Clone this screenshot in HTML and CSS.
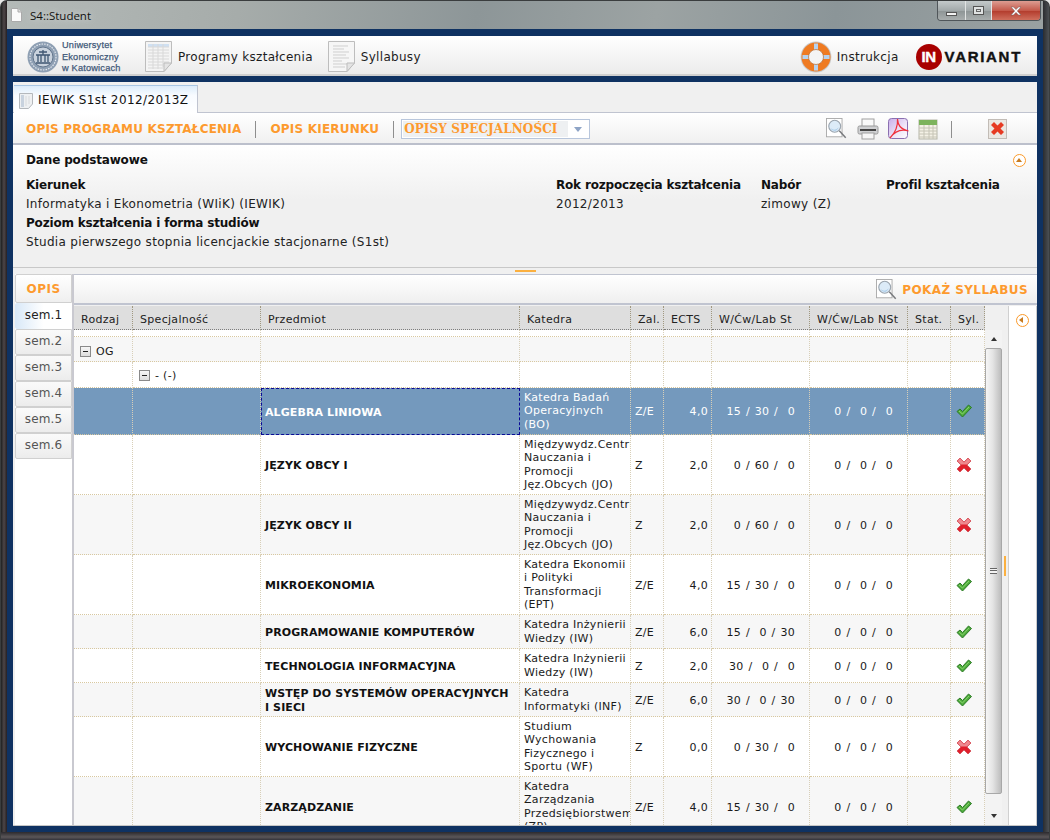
FILE: index.html
```html
<!DOCTYPE html>
<html lang="pl">
<head>
<meta charset="utf-8">
<title>S4::Student</title>
<link rel="stylesheet" href="styles.css">
</head>
<body>
<svg class="sprite" width="0" height="0" aria-hidden="true">
  <defs>
    <linearGradient id="pdfbg" x1="0" y1="0" x2="1" y2="1"><stop offset="0" stop-color="#c9aeea"/><stop offset=".6" stop-color="#efe6f8"/><stop offset="1" stop-color="#fff"/></linearGradient>
    <symbol id="ok" viewBox="0 0 16 14">
      <path d="M1 7.5 L4 5 L6.5 7.5 L12.5 1 L15.5 3.5 L6.5 13 Z" fill="#4caa3a" stroke="#2c7a25" stroke-width="1" stroke-linejoin="round"/>
      <path d="M3 7 L6.5 10 L13 3" fill="none" stroke="#8bd36f" stroke-width="1"/>
    </symbol>
    <symbol id="no" viewBox="0 0 16 16">
      <path d="M1 4 L4 1 L8 5 L12 1 L15 4 L11 8 L15 12 L12 15 L8 11 L4 15 L1 12 L5 8 Z" fill="#e0202c" stroke="#c8323c" stroke-width=".6" stroke-linejoin="round"/>
      <path d="M1.5 4 L4 1.5 L8 5.5 L12 1.5 L14.5 4 L11 7.5 L5 7.5 Z" fill="#ee8a90"/>
    </symbol>
    <symbol id="lens" viewBox="0 0 24 24">
      <rect x=".5" y=".5" width="17" height="20" fill="#fff" stroke="#a8a8a8"/>
      <circle cx="9.5" cy="9" r="6.5" fill="#dcebf8" stroke="#9aa4ae" stroke-width="1.2"/>
      <path d="M5 11 Q9 15 14 10 Q12 14 9 14 Q6 14 5 11Z" fill="#a8cbe8"/>
      <path d="M14.5 14 L21.5 21.5" stroke="#77797c" stroke-width="1.6"/>
    </symbol>
  </defs>
</svg>

<div class="window">
  <div class="titlebar">
    <svg class="title-icon" width="11" height="14" viewBox="0 0 11 14"><path d="M.5.5H7L10.5 4V13.5H.5Z" fill="#fafafa" stroke="#aaa"/><path d="M7 .5V4H10.5" fill="#ddd" stroke="#aaa"/></svg>
    <span class="title-text">S4::Student</span>
    <div class="win-buttons">
      <div class="win-btn win-min"><span class="min-glyph"></span></div>
      <div class="win-btn win-max"><span class="max-glyph"></span></div>
      <div class="win-btn win-close">
        <svg width="12" height="10" viewBox="0 0 12 10"><path d="M1 1H3.5L6 3.6 8.5 1H11L7.3 5 11 9H8.5L6 6.4 3.5 9H1L4.7 5Z" fill="#fff" stroke="#6d5a58" stroke-width=".5"/></svg>
      </div>
    </div>
  </div>

  <div class="client">
    <header class="app-header">
      <div class="uni">
        <svg width="32" height="32" viewBox="0 0 32 32">
          <circle cx="16" cy="16" r="15.5" fill="#8e9fb3"/>
          <circle cx="16" cy="16" r="13" fill="none" stroke="#e4e8ee" stroke-width="1.2" stroke-dasharray="1.5 1.2"/>
          <circle cx="16" cy="16" r="10" fill="#c9d2dd" stroke="#62758c"/>
          <path d="M9 14H23M11 14V21M14 14V21M18 14V21M21 14V21M9 22H23M16 9V14M12 11 H20" stroke="#3e5672" stroke-width="1.3" fill="none"/>
        </svg>
        <div class="uni-name">Uniwersytet<br>Ekonomiczny<br>w Katowicach</div>
      </div>
      <a class="nav-item">
        <svg width="27" height="31" viewBox="0 0 27 31">
          <path d="M.5.5H26.5V22L19 30.5H.5Z" fill="#f4f4f4" stroke="#bdbdbd"/>
          <rect x="3" y="3" width="21" height="3" fill="#cfe0f2"/>
          <path d="M3 6H24M3 9H24M3 12H24M3 15H24M3 18H24M3 21H24M3 24H18M3 27H18M8 3V28M13 3V28M18 3V26" stroke="#d8d8d8" fill="none"/>
          <path d="M19 30.5V22H26.5Z" fill="#e4e4e4" stroke="#bdbdbd"/>
        </svg>
        <span>Programy kształcenia</span>
      </a>
      <a class="nav-item">
        <svg width="27" height="31" viewBox="0 0 27 31">
          <path d="M.5.5H26.5V22L19 30.5H.5Z" fill="#f6f6f6" stroke="#bdbdbd"/>
          <path d="M5 5H20M5 8H16M5 11H21M5 14H18M5 17H21M5 20H14M5 23H20M5 26H17" stroke="#cfcfcf" fill="none"/>
          <path d="M19 30.5V22H26.5Z" fill="#e4e4e4" stroke="#bdbdbd"/>
        </svg>
        <span>Syllabusy</span>
      </a>
      <div class="header-spacer"></div>
      <a class="help">
        <svg width="32" height="32" viewBox="0 0 32 32">
          <circle cx="16" cy="16" r="15.4" fill="#c9c9c9"/>
          <circle cx="16" cy="16" r="11" fill="none" stroke="#ef7b22" stroke-width="7"/>
          <path d="M16 2.5V9M16 23V29.5M2.5 16H9M23 16H29.5" stroke="#b6d2ee" stroke-width="4"/>
          <circle cx="16" cy="16" r="7.5" fill="#f4f4f4" stroke="#b9672a" stroke-width=".7"/>
        </svg>
        <span>Instrukcja</span>
      </a>
      <div class="brand">
        <span class="brand-in">IN</span>
        <span class="brand-name">VARIANT</span>
      </div>
    </header>

    <main class="panel">
      <div class="tab-row">
        <div class="doc-tab">
          <svg width="14" height="16" viewBox="0 0 14 16"><path d="M.5.5H13.5V11L9.5 15.5H.5Z" fill="#eef0f2" stroke="#b4b8bc"/><rect x="2" y="2" width="3" height="12" fill="#c8d2de"/><path d="M7 3V13M10 3V11" stroke="#d8dadc"/></svg>
          <span>IEWIK S1st 2012/2013Z</span>
        </div>
      </div>

      <div class="toolbar">
        <a class="tool-link">OPIS PROGRAMU KSZTAŁCENIA</a>
        <span class="tool-sep"></span>
        <a class="tool-link">OPIS KIERUNKU</a>
        <span class="tool-sep"></span>
        <div class="combo">
          <span class="combo-text">OPISY SPECJALNOŚCI</span>
          <span class="combo-arrow"></span>
        </div>
        <div class="tool-spacer"></div>
        <svg class="tool-icon" width="22" height="22"><use href="#lens"/></svg>
        <svg class="tool-icon print" width="22" height="22" viewBox="0 0 22 22">
          <rect x="5" y="1" width="12" height="8" fill="#fafafa" stroke="#a0a0a0"/>
          <rect x="1" y="8" width="20" height="8" rx="1.5" fill="#cfd0d2" stroke="#9a9a9a"/>
          <rect x="3" y="11" width="16" height="2" fill="#444"/>
          <rect x="5" y="15" width="12" height="6" fill="#f6f6f6" stroke="#a0a0a0"/>
        </svg>
        <svg class="tool-icon" width="21" height="22" viewBox="0 0 21 22">
          <rect x=".5" y=".5" width="19" height="20" rx="3" fill="url(#pdfbg)" stroke="#8a6fb0"/>
          <path d="M2 20 C7 15 10 8 9.5 1 C10 7 12 11 20.5 13 C14 11 7 13 2 20Z" fill="none" stroke="#f0303c" stroke-width="1.2"/>
        </svg>
        <svg class="tool-icon" width="20" height="21" viewBox="0 0 20 21">
          <rect x="1" y="1" width="18" height="19" fill="#f4f1e6" stroke="#b5b5a8"/>
          <rect x="1" y="1" width="18" height="5" fill="#7db35c"/>
          <path d="M1 9H19M1 12H19M1 15H19M1 18H19M6 6V20M11 6V20M15 6V20" stroke="#c6c4b6"/>
        </svg>
        <span class="tool-sep icon-sep"></span>
        <svg class="tool-icon close-doc" width="19" height="21" viewBox="0 0 19 21">
          <rect x=".5" y=".5" width="18" height="19" fill="#ebe7e2" stroke="#c2bcb6"/>
          <path d="M3 6 L6 3 L9.5 6.5 L13 3 L16 6 L12.5 9.5 L16 13 L13 16 L9.5 12.5 L6 16 L3 13 L6.5 9.5 Z" fill="#e63a22"/>
        </svg>
      </div>

      <section class="info">
        <div class="info-head">
          <h2>Dane podstawowe</h2>
          <span class="round-btn up"></span>
        </div>
        <div class="info-grid">
          <div class="lbl">Kierunek</div>
          <div class="lbl">Rok rozpoczęcia kształcenia</div>
          <div class="lbl">Nabór</div>
          <div class="lbl">Profil kształcenia</div>
          <div>Informatyka i Ekonometria (WIiK) (IEWIK)</div>
          <div>2012/2013</div>
          <div>zimowy (Z)</div>
          <div></div>
          <div class="lbl wide">Poziom kształcenia i forma studiów</div>
          <div class="wide">Studia pierwszego stopnia licencjackie stacjonarne (S1st)</div>
        </div>
      </section>

      <div class="splitter"><span></span></div>

      <div class="body">
        <nav class="side-tabs">
          <div class="side-tab opis">OPIS</div>
          <div class="side-tab active">sem.1</div>
          <div class="side-tab">sem.2</div>
          <div class="side-tab">sem.3</div>
          <div class="side-tab">sem.4</div>
          <div class="side-tab">sem.5</div>
          <div class="side-tab">sem.6</div>
        </nav>

        <div class="content">
          <div class="content-bar">
            <svg width="22" height="22"><use href="#lens"/></svg>
            <a class="tool-link show-syl">POKAŻ SYLLABUS</a>
          </div>
          <div class="grid-row">
            <div class="grid-wrap">
              <table class="grid">
                <colgroup>
                  <col class="c1"><col class="c2"><col class="c3"><col class="c4"><col class="c5">
                  <col class="c6"><col class="c7"><col class="c8"><col class="c9"><col class="c10">
                </colgroup>
                <thead>
                  <tr>
                    <th>Rodzaj</th><th>Specjalność</th><th>Przedmiot</th><th>Katedra</th><th>Zal.</th>
                    <th>ECTS</th><th>W/Ćw/Lab St</th><th>W/Ćw/Lab NSt</th><th>Stat.</th><th>Syl.</th>
                  </tr>
                </thead>
                <tbody>
                  <tr class="r-gap"><td></td><td></td><td></td><td></td><td></td><td></td><td></td><td></td><td></td><td></td></tr>
                  <tr class="r-og alt">
                    <td class="tree"><span class="minus"></span>OG</td><td></td><td></td><td></td><td></td><td></td><td></td><td></td><td></td><td></td>
                  </tr>
                  <tr class="r-sub">
                    <td></td><td class="tree"><span class="minus"></span>- (-)</td><td></td><td></td><td></td><td></td><td></td><td></td><td></td><td></td>
                  </tr>
                  <tr class="selected r46">
                    <td></td><td></td><td class="subj focus">ALGEBRA LINIOWA</td><td class="dept">Katedra Badań Operacyjnych (BO)</td><td>Z/E</td>
                    <td class="num">4,0</td><td class="hrs">15 / 30 /&nbsp; 0</td><td class="hrs">0 /&nbsp; 0 /&nbsp; 0</td><td></td>
                    <td class="mark"><svg width="16" height="14"><use href="#ok"/></svg></td>
                  </tr>
                  <tr class="r60">
                    <td></td><td></td><td class="subj">JĘZYK OBCY I</td><td class="dept">Międzywydz.Centrum Nauczania i Promocji Jęz.Obcych (JO)</td><td>Z</td>
                    <td class="num">2,0</td><td class="hrs">0 / 60 /&nbsp; 0</td><td class="hrs">0 /&nbsp; 0 /&nbsp; 0</td><td></td>
                    <td class="mark"><svg width="16" height="16"><use href="#no"/></svg></td>
                  </tr>
                  <tr class="r60 alt">
                    <td></td><td></td><td class="subj">JĘZYK OBCY II</td><td class="dept">Międzywydz.Centrum Nauczania i Promocji Jęz.Obcych (JO)</td><td>Z</td>
                    <td class="num">2,0</td><td class="hrs">0 / 60 /&nbsp; 0</td><td class="hrs">0 /&nbsp; 0 /&nbsp; 0</td><td></td>
                    <td class="mark"><svg width="16" height="16"><use href="#no"/></svg></td>
                  </tr>
                  <tr class="r60">
                    <td></td><td></td><td class="subj">MIKROEKONOMIA</td><td class="dept">Katedra Ekonomii i Polityki Transformacji (EPT)</td><td>Z/E</td>
                    <td class="num">4,0</td><td class="hrs">15 / 30 /&nbsp; 0</td><td class="hrs">0 /&nbsp; 0 /&nbsp; 0</td><td></td>
                    <td class="mark"><svg width="16" height="14"><use href="#ok"/></svg></td>
                  </tr>
                  <tr class="r34 alt">
                    <td></td><td></td><td class="subj">PROGRAMOWANIE KOMPUTERÓW</td><td class="dept">Katedra Inżynierii Wiedzy (IW)</td><td>Z/E</td>
                    <td class="num">6,0</td><td class="hrs">15 /&nbsp; 0 / 30</td><td class="hrs">0 /&nbsp; 0 /&nbsp; 0</td><td></td>
                    <td class="mark"><svg width="16" height="14"><use href="#ok"/></svg></td>
                  </tr>
                  <tr class="r34">
                    <td></td><td></td><td class="subj">TECHNOLOGIA INFORMACYJNA</td><td class="dept">Katedra Inżynierii Wiedzy (IW)</td><td>Z</td>
                    <td class="num">2,0</td><td class="hrs">30 /&nbsp; 0 /&nbsp; 0</td><td class="hrs">0 /&nbsp; 0 /&nbsp; 0</td><td></td>
                    <td class="mark"><svg width="16" height="14"><use href="#ok"/></svg></td>
                  </tr>
                  <tr class="r34 alt">
                    <td></td><td></td><td class="subj">WSTĘP DO SYSTEMÓW OPERACYJNYCH I SIECI</td><td class="dept">Katedra Informatyki (INF)</td><td>Z/E</td>
                    <td class="num">6,0</td><td class="hrs">30 /&nbsp; 0 / 30</td><td class="hrs">0 /&nbsp; 0 /&nbsp; 0</td><td></td>
                    <td class="mark"><svg width="16" height="14"><use href="#ok"/></svg></td>
                  </tr>
                  <tr class="r60">
                    <td></td><td></td><td class="subj">WYCHOWANIE FIZYCZNE</td><td class="dept">Studium Wychowania Fizycznego i Sportu (WF)</td><td>Z</td>
                    <td class="num">0,0</td><td class="hrs">0 / 30 /&nbsp; 0</td><td class="hrs">0 /&nbsp; 0 /&nbsp; 0</td><td></td>
                    <td class="mark"><svg width="16" height="16"><use href="#no"/></svg></td>
                  </tr>
                  <tr class="r60 alt">
                    <td></td><td></td><td class="subj">ZARZĄDZANIE</td><td class="dept">Katedra Zarządzania Przedsiębiorstwem (ZP)</td><td>Z/E</td>
                    <td class="num">4,0</td><td class="hrs">15 / 30 /&nbsp; 0</td><td class="hrs">0 /&nbsp; 0 /&nbsp; 0</td><td></td>
                    <td class="mark"><svg width="16" height="14"><use href="#ok"/></svg></td>
                  </tr>
                </tbody>
              </table>
            </div>
            <div class="scrollbar">
              <div class="sb-btn sb-up"><span class="arrow-up"></span></div>
              <div class="sb-thumb"><span class="grip"></span></div>
              <div class="sb-btn sb-down"><span class="arrow-down"></span></div>
            </div>
            <div class="v-split"><span></span></div>
            <aside class="right-rail"><span class="round-btn left"></span></aside>
          </div>
        </div>
      </div>
    </main>
  </div>
</div>
</body>
</html>
```

FILE: styles.css
```css
* { box-sizing: border-box; }
html, body { margin: 0; padding: 0; }
body {
  width: 1050px; height: 840px; overflow: hidden;
  font: 11px/13.4px "DejaVu Sans", Verdana, sans-serif;
  letter-spacing: .3px;
  color: #1a1a1a; background: #e8e8e8;
}
.sprite { position: absolute; }
a { color: inherit; text-decoration: none; }

.window {
  width: 1050px; height: 840px; display: flex; flex-direction: column;
  padding: 0 6px 8px;
  border-radius: 7px 7px 0 0;
  border: 1px solid #3a3d3e; border-bottom: 0;
  background:
    linear-gradient(0deg, #34333a 0, #5a5658 3px, #2c2a2e 8px, transparent 8px),
    linear-gradient(90deg, #1f2020 0, #4d4648 3px, #262022 6px, transparent 6px, transparent 1042px, #2a2c30 1042px, #4c5054 100%),
    linear-gradient(100deg, #b4bab8 0, #a6acaa 20%, #8d9698 40%, #9ca3a3 55%, #8b9598 70%, #a4a9a8 100%);
}
.titlebar { height: 28px; flex: none; display: flex; align-items: center; margin: 0 -6px; padding-left: 10px; }
.title-icon { margin-right: 8px; }
.title-text { font: 11.5px "Open Sans", "Liberation Sans", sans-serif; letter-spacing: 0; color: #111; text-shadow: 0 0 6px #d8dcda; }
.win-buttons {
  margin-left: auto; margin-right: 8px; align-self: flex-start; display: flex; height: 20px;
  border: 1px solid #50565a; border-top: 0; border-radius: 0 0 4px 4px; overflow: hidden;
}
.win-btn { display: flex; align-items: center; justify-content: center; height: 100%; border-right: 1px solid #e2e4e4; }
.win-min { width: 28px; }
.win-max { width: 26px; }
.win-min, .win-max { background: linear-gradient(#c4cacb, #a2a9aa 50%, #8d9495 51%, #a9aeae); }
.win-close { width: 48px; border: 0; background: linear-gradient(#dd9d92, #c45a4b 50%, #b23a2b 51%, #cf6f5d); }
.min-glyph { width: 11px; height: 4px; background: #f2f2f2; border: 1px solid #555; margin-top: 7px; }
.max-glyph { width: 11px; height: 9px; background: #dfe2e2; border: 1px solid #555; box-shadow: inset 0 0 0 2px #dfe2e2, inset 0 0 0 3px #666; }

.client {
  flex: 1; min-height: 0; display: flex; flex-direction: column; gap: 6px;
  background: #0f3262; padding: 7px 6px 6px;
}
.app-header {
  height: 40px; flex: none; display: flex; align-items: center; padding: 3px 15px 0 14px;
  background: linear-gradient(#fff, #ececec); border-bottom: 2px solid #d0d0d0;
}
.uni { display: flex; align-items: center; gap: 3px; width: 118px; }
.uni-name { font: 9.2px/11.5px "Liberation Sans", Arial, sans-serif; color: #3f5878; letter-spacing: .2px; -webkit-text-stroke: .25px #3f5878; white-space: nowrap; padding-top: 2px; }
.nav-item { display: flex; align-items: center; gap: 6px; font-size: 12px; color: #1d1d1d; margin-right: 15px; }
.nav-item span, .help span { padding-top: 3px; }
.header-spacer { flex: 1; }
.help { display: flex; align-items: center; gap: 5px; font-size: 12px; color: #1d1d1d; margin-right: 17px; }
.brand { display: flex; align-items: center; gap: 3px; }
.brand-in {
  width: 26px; height: 26px; border-radius: 50%; background: #a80000; color: #fff;
  font: 900 15px/26px "Liberation Sans", Arial, sans-serif; text-align: center; letter-spacing: -.5px;
  -webkit-text-stroke: .4px #fff;
}
.brand-name { font: bold 15px "Liberation Sans", Arial, sans-serif; color: #111; letter-spacing: 1.7px; -webkit-text-stroke: .4px #111; }

.panel { flex: 1; min-height: 0; display: flex; flex-direction: column; background: #f0f0f0; border-bottom: 1px solid #c6c6c6; }
.tab-row { height: 31px; flex: none; display: flex; align-items: flex-end; padding-left: 1px; border-bottom: 1px solid #c0c4d0; }
.doc-tab {
  width: 184px; height: 28px; display: flex; align-items: center; gap: 5px; padding: 3px 0 0 5px; margin-bottom: -1px;
  font-size: 12px; letter-spacing: .42px; color: #111;
  background: linear-gradient(#dcecfa, #f8fbff 35%, #fff);
  border: 1px solid #c0c4d0; border-bottom: 0; border-left: 0; border-top: 1px solid #a8c6e4;
}
.toolbar {
  height: 32px; flex: none; display: flex; align-items: center; padding: 2px 30px 0 13px;
  background: linear-gradient(#fff, #f0f0f0); border-bottom: 2px solid #bcc0cc;
}
.tool-link { font: bold 12px "DejaVu Sans", Verdana, sans-serif; letter-spacing: .2px; color: #fd9a2e; white-space: nowrap; }
.tool-sep { width: 1px; height: 17px; background: #8e8e8e; margin: 0 14px; }
.combo { width: 189px; height: 20px; margin-left: -7px; display: flex; align-items: center; padding: 1px; background: #fff; border: 1px solid #b8c6dc; }
.combo-text {
  flex: 1; height: 16px; padding-left: 1px; background: #eef0f2;
  font: bold 12px/16px "DejaVu Serif", serif; letter-spacing: .1px; color: #fd9a2e; white-space: nowrap; overflow: hidden;
}
.combo-arrow { width: 20px; height: 16px; position: relative; flex: none; }
.combo-arrow::after { content: ""; position: absolute; left: 6px; top: 6px; border: 4px solid transparent; border-top: 5px solid #8ea4c6; border-bottom: 0; }
.tool-spacer { flex: 1; }
.tool-icon { margin-left: 9px; flex: none; }
.icon-sep { margin: 0 0 0 13px; }
.close-doc { margin-left: 36px; }

.info { height: 123px; flex: none; padding: 7px 11px 0 13px; background: linear-gradient(#fff, #f0f0f0 45%); border-bottom: 1px solid #c8c8c8; }
.info-head { display: flex; justify-content: space-between; align-items: center; height: 16px; }
.info-head h2 { margin: 0; font: bold 12px "DejaVu Sans", sans-serif; letter-spacing: -.15px; color: #111; }
.info-grid { display: grid; grid-template-columns: 530px 205px 125px 1fr; grid-auto-rows: 19px; margin-top: 8px; align-items: center; font-size: 12px; letter-spacing: .32px; color: #222; }
.lbl { font-weight: bold; color: #111; letter-spacing: -.18px; }
.wide { grid-column: 1 / -1; }
.round-btn { width: 13px; height: 13px; border-radius: 50%; border: 1.5px solid #fb9a2a; background: #fff; display: inline-block; position: relative; flex: none; }
.round-btn::after { content: ""; position: absolute; border: 3px solid transparent; }
.round-btn.up::after { left: 2px; top: 0; border-bottom: 4px solid #c87b1f; border-top: 0; margin-top: 3px; }
.round-btn.left::after { left: 0; top: 2px; margin-left: 2px; border-right: 4px solid #c87b1f; border-left: 0; }

.splitter { height: 6px; flex: none; display: flex; justify-content: center; padding-top: 2px; }
.splitter span { width: 21px; height: 2px; background: #fbb040; }

.body { flex: 1; min-height: 0; display: flex; padding-left: 2px; }
.side-tabs { width: 57px; flex: none; display: flex; flex-direction: column; background: #fff; }
.side-tab {
  height: 26px; flex: none; display: flex; align-items: center; justify-content: center;
  font-size: 12px; letter-spacing: .1px; color: #555; background: linear-gradient(#fafafa, #ececec);
  border: 1px solid #d0d0d0; border-radius: 2px 0 0 2px;
}
.side-tab.opis { height: 29px; padding-top: 3px; color: #fd9a2e; font-weight: bold; letter-spacing: .5px; background: linear-gradient(#fff, #efefef); }
.side-tab.active { color: #222; background: linear-gradient(90deg, #d8e8f8, #fff 50%); border: 0; }

.content { flex: 1; min-width: 0; display: flex; flex-direction: column; border-left: 2px solid #c9c9d0; background: #f0f0f0; }
.content-bar {
  height: 31px; flex: none; display: flex; align-items: center; justify-content: flex-end; gap: 4px; padding: 2px 9px 0 0;
  background: linear-gradient(#fff, #efefef); border-bottom: 2px solid #c0c4d0; border-top: 1px solid #c0c4d0;
}
.show-syl { letter-spacing: .42px; }
.grid-row { flex: 1; min-height: 0; display: flex; padding-top: 1px; }
.grid-wrap { width: 911px; flex: none; overflow: hidden; }
.grid { width: 911px; table-layout: fixed; border-collapse: separate; border-spacing: 0; background: #fff; }
.c1 { width: 59px; } .c2 { width: 128px; } .c3 { width: 259px; } .c4 { width: 111px; } .c5 { width: 33px; }
.c6 { width: 48px; } .c7 { width: 98px; } .c8 { width: 98px; } .c9 { width: 43px; } .c10 { width: 34px; }
th {
  height: 24px; padding: 5px 0 0 7px; font-weight: normal; text-align: left; color: #222; white-space: nowrap; overflow: hidden;
  background: #dedede; border-right: 1px dotted #a09880; border-bottom: 1px dotted #7d7d7d;
}
td { padding: 2px 0 0 4px; border-right: 1px dotted #d8cfb8; border-bottom: 1px dotted #d8c8a0; overflow: hidden; color: #1a1a1a; }
tr.alt td { background: #f7f7f7; }
.r-gap td { height: 7px; padding: 0; }
.r-og td { height: 25px; }
.r-og .tree { padding-top: 5px; }
.r-sub td { height: 26px; }
.r46 td { height: 47px; }
.r60 td { height: 60px; }
.r34 td { height: 34px; }
.tree { overflow: visible; white-space: nowrap; padding-left: 6px; }
.minus { display: inline-block; vertical-align: -2px; width: 11px; height: 11px; margin-right: 5px; border: 1px solid #8a8a8a; background: linear-gradient(#f6f6f6, #ddd); position: relative; }
.minus::after { content: ""; position: absolute; left: 2px; top: 4px; width: 5px; height: 1px; background: #222; }
.subj { font-weight: bold; color: #111; letter-spacing: .1px; padding-right: 8px; }
.dept { padding-right: 2px; padding-top: 0; }
.num { text-align: right; padding-right: 3px; }
.hrs { text-align: right; padding-right: 14px; white-space: pre; word-spacing: 1px; }
.mark { padding-top: 0; }
.mark svg { display: block; margin-left: 1px; }
.selected td { background: #7499bd; color: #fff; }
.selected .focus { border: 1px dashed #0a0a96; padding-left: 3px; }

.scrollbar { width: 17px; flex: none; margin-top: 24px; display: flex; flex-direction: column; background: #f3f3f3; }
.sb-btn { flex: none; display: flex; align-items: center; justify-content: center; }
.sb-up { height: 18px; }
.sb-down { height: 31px; }
.arrow-up { border: 3.5px solid transparent; border-bottom: 4px solid #333; border-top: 0; }
.arrow-down { border: 3.5px solid transparent; border-top: 4px solid #333; border-bottom: 0; margin-top: 12px; }
.sb-thumb { flex: 1; display: flex; align-items: center; justify-content: center; border: 1px solid #a8a8a8; border-radius: 2px; background: linear-gradient(90deg, #f6f6f6, #e4e4e4 45%, #bdbdbd); }
.grip { width: 7px; height: 6px; border-top: 1px solid #666; border-bottom: 1px solid #666; background: linear-gradient(#f3f3f3 0 1px, #666 1px 2px, #f3f3f3 2px); }
.v-split { width: 6px; flex: none; display: flex; align-items: center; justify-content: center; }
.v-split span { width: 2px; height: 20px; background: #fbb040; }
.right-rail { flex: 1; background: #fff; border-left: 1px solid #d0d0d0; border-right: 1px solid #ccc; display: flex; justify-content: center; padding-top: 8px; }
```
